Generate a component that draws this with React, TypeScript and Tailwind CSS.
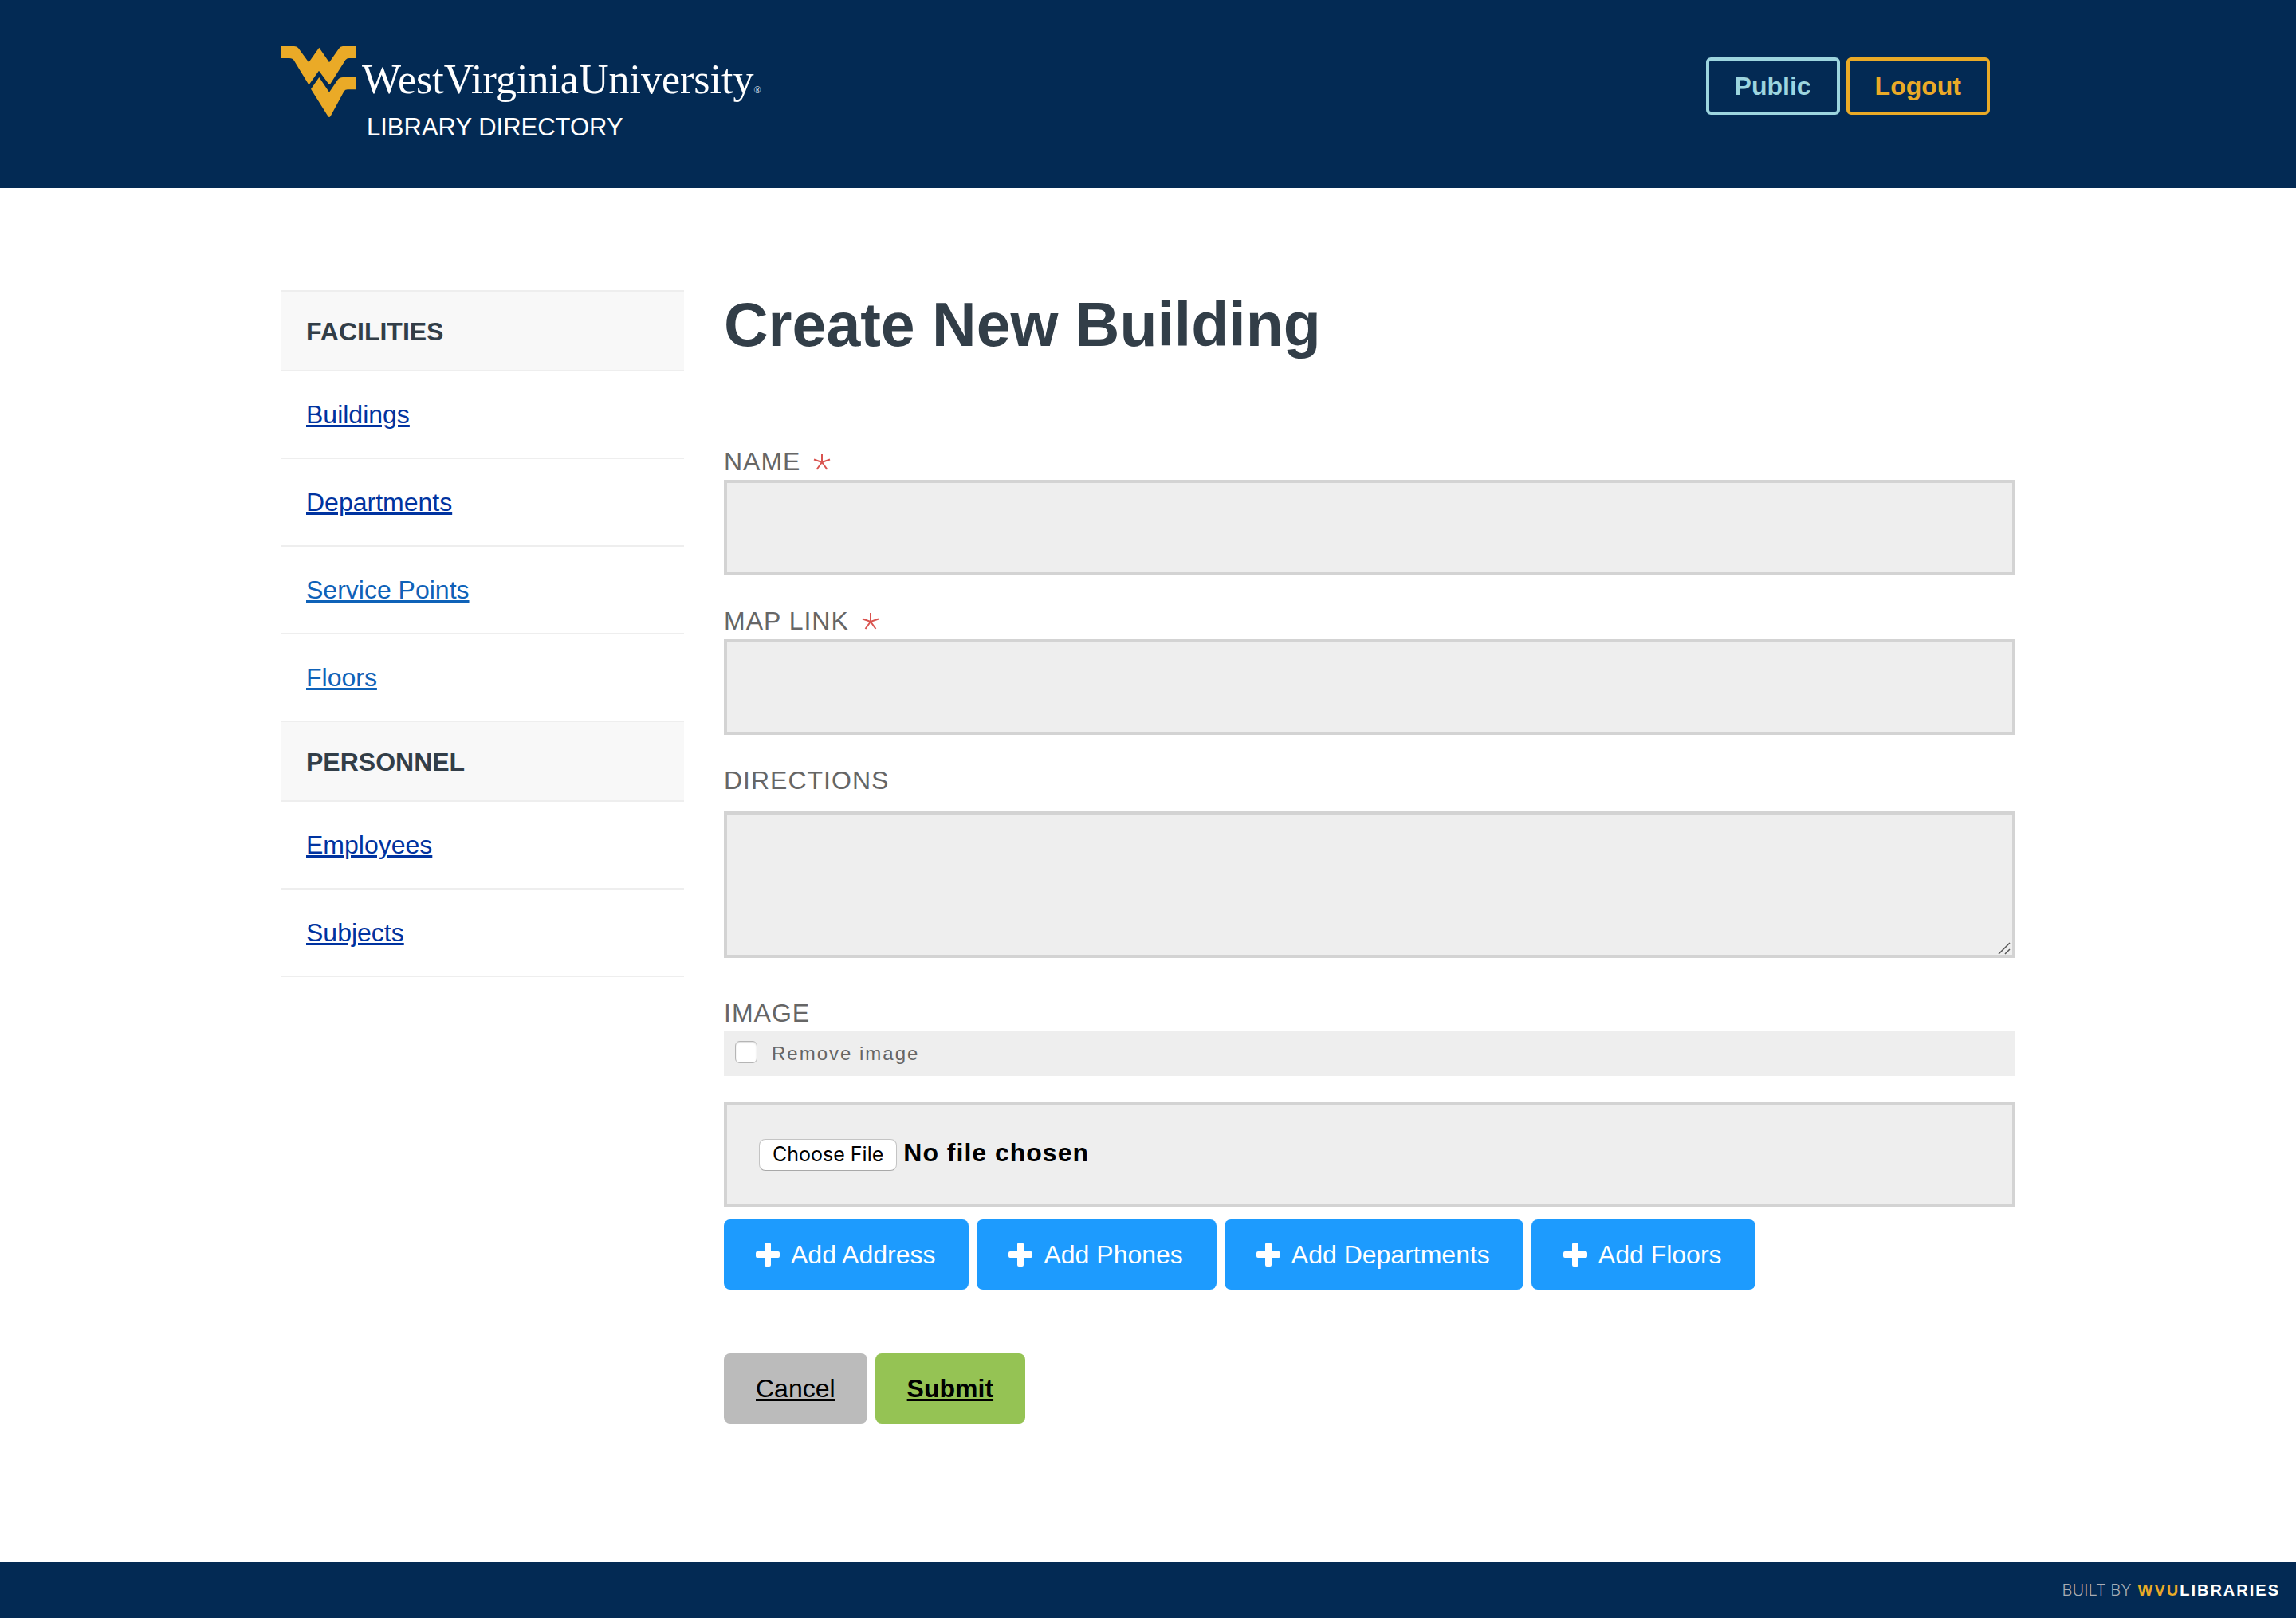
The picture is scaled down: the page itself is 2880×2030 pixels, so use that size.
import type { ReactNode } from "react";

const SANS = "font-['Liberation_Sans',Arial,sans-serif]";

function Logo() {
  return (
    <a href="#home" aria-label="West Virginia University Library Directory" className="flex text-white">
      <svg viewBox="0 0 96 90" className="h-[90px] w-24 shrink-0 fill-[#eaaa27]" aria-hidden="true">
        <path d="M1 0H17Q20 0 22 2L35.3 20.3L48.3 1.7L61 20.3L73 3Q75 0 78 0H95V15H86Q83 15 81.3 17.3L62.5 47Q61 48.5 60 47L48 30.7L36.5 47Q35.5 48.5 34.5 47L16.7 17.7Q15 15 11 15H1Z" />
        <path d="M48.3 39L61 57.7L71.7 42Q74 39 78 39H95V54.3H84Q81 54.3 79.7 56.3L62.5 88Q61 90 59.5 88L38 53.7Z" />
      </svg>
      <span className="flex flex-col pl-1.5 pt-3">
        <span className="flex items-baseline font-['Liberation_Serif',Georgia,serif] text-[52px] leading-[60px]">
          <span>West</span>
          <span>Virginia</span>
          <span>University</span>
          <span className="text-[12px] leading-none">®</span>
        </span>
        <span className="mt-2.5 pl-1.5 text-[31px] leading-10">LIBRARY DIRECTORY</span>
      </span>
    </a>
  );
}

function NavHeading({ children }: { children: ReactNode }) {
  return (
    <h2 className="border-b-2 border-[#eeeeee] bg-[#f8f8f8] px-8 pt-0.5 text-[32px] leading-[96px] font-bold text-[#323e48]">
      {children}
    </h2>
  );
}

function NavLink({ children, fresh = false }: { children: string; fresh?: boolean }) {
  return (
    <li className="border-b-2 border-[#eeeeee] px-8 text-[32px] leading-[108px]">
      <a
        href={"#" + children.toLowerCase().replace(" ", "-")}
        className={fresh ? "text-[#0f62b8] underline" : "text-[#0033a0] underline"}
      >
        {children}
      </a>
    </li>
  );
}

function Required() {
  return (
    <svg viewBox="0 0 22 22" className="h-[22px] w-[22px] stroke-[#d9534f] stroke-2" fill="none" aria-label="required">
      <path d="M11 1V12M1 8.5L11 12L21 8.5M11 12L4.5 21M11 12L17.5 21" />
    </svg>
  );
}

function FieldLabel({ id, required = false, children }: { id: string; required?: boolean; children: ReactNode }) {
  return (
    <label htmlFor={id} className="flex items-center gap-4 text-[32px] leading-[46px] tracking-[1px] text-[#666666]">
      {children}
      {required && <Required />}
    </label>
  );
}

function AddButton({ children }: { children: ReactNode }) {
  return (
    <button type="button" className="flex h-[88px] items-center gap-3.5 rounded-lg bg-[#1d9bfe] pr-[42px] pl-10 text-[32px] text-white">
      <svg viewBox="0 0 30 30" className="h-[30px] w-[30px] fill-white" aria-hidden="true">
        <path d="M13 0h4a2 2 0 0 1 2 2v9h9a2 2 0 0 1 2 2v4a2 2 0 0 1-2 2h-9v9a2 2 0 0 1-2 2h-4a2 2 0 0 1-2-2v-9H2a2 2 0 0 1-2-2v-4a2 2 0 0 1 2-2h9V2a2 2 0 0 1 2-2z" />
      </svg>
      {children}
    </button>
  );
}

const field = "block w-full border-4 border-[#d3d3d3] bg-[#eeeeee] px-10 text-[32px] font-bold text-black outline-none";

export default function App() {
  return (
    <div className={`${SANS} flex min-h-screen flex-col bg-white`}>
      <header className="bg-[#032a54]">
        <div className="mx-auto flex min-h-[236px] max-w-[2176px] items-start justify-between pt-[58px]">
          <Logo />
          <nav className="flex gap-2 pt-3.5 pr-8 text-[32px] leading-[64px] font-bold">
            <a href="#public" className="rounded-md border-4 border-[#9dd5df] px-8 text-[#9dd5df]">Public</a>
            <a href="#logout" className="rounded-md border-4 border-[#eaaa27] px-8 text-[#eaaa27]">Logout</a>
          </nav>
        </div>
      </header>

      <div className="mx-auto flex w-full max-w-[2176px] flex-1 items-start gap-[50px] pt-32 pb-32">
        <nav className="w-[506px] shrink-0 border-t-2 border-[#eeeeee]">
          <NavHeading>FACILITIES</NavHeading>
          <ul>
            <NavLink>Buildings</NavLink>
            <NavLink>Departments</NavLink>
            <NavLink fresh>Service Points</NavLink>
            <NavLink fresh>Floors</NavLink>
          </ul>
          <NavHeading>PERSONNEL</NavHeading>
          <ul>
            <NavLink>Employees</NavLink>
            <NavLink>Subjects</NavLink>
          </ul>
        </nav>

        <main className="min-w-0 flex-1">
          <h1 className="mb-[106px] text-[77px] leading-[86px] font-bold text-[#323e48]">Create New Building</h1>
          <form onSubmit={(e) => e.preventDefault()}>
            <div className="mb-[34px]">
              <FieldLabel id="name" required>NAME</FieldLabel>
              <input id="name" type="text" className={`${field} h-[120px]`} />
            </div>
            <div className="mb-[34px]">
              <FieldLabel id="map" required>MAP LINK</FieldLabel>
              <input id="map" type="text" className={`${field} h-[120px]`} />
            </div>
            <div className="mb-[46px]">
              <FieldLabel id="directions">DIRECTIONS</FieldLabel>
              <div className="relative mt-4">
                <textarea
                  id="directions"
                  className={`${field} h-[184px] resize-y [&::-webkit-resizer]:bg-transparent`}
                />
                <svg
                  viewBox="0 0 16 16"
                  className="pointer-events-none absolute right-1.5 bottom-1 h-4 w-4 stroke-[#555555]"
                  fill="none"
                  strokeWidth="1.5"
                  aria-hidden="true"
                >
                  <path d="M1 15L15 1M9 15L15 9" />
                </svg>
              </div>
            </div>
            <FieldLabel id="image">IMAGE</FieldLabel>
            <label className="flex h-14 items-center gap-[18px] bg-[#eeeeee] px-3.5 text-[24px] tracking-[2px] text-[#666666]">
              <input
                type="checkbox"
                className="mb-1 h-7 w-7 appearance-none rounded-md border border-[#b5b5b5] bg-white shadow-[inset_0_1px_2px_rgba(0,0,0,0.15)]"
              />
              Remove image
            </label>
            <input
              id="image"
              type="file"
              className="mt-8 block h-[132px] w-full border-4 border-[#d3d3d3] bg-[#eeeeee] px-10 pt-9 text-[32px] font-bold tracking-[1px] text-black file:mr-2 file:h-10 file:rounded-lg file:border file:border-[#c4c4c4] file:border-b-[#a8a8a8] file:bg-white file:px-4 file:font-['Inter',sans-serif] file:text-[25px] file:leading-none file:font-normal file:tracking-normal file:text-black"
            />
            <div className="mt-4 flex flex-wrap gap-2.5">
              <AddButton>Add Address</AddButton>
              <AddButton>Add Phones</AddButton>
              <AddButton>Add Departments</AddButton>
              <AddButton>Add Floors</AddButton>
            </div>
            <div className="mt-20 flex gap-2.5 text-[32px] leading-[88px]">
              <a href="#cancel" className="rounded-lg bg-[#bbbbbb] px-10 text-black underline">Cancel</a>
              <button type="submit" className="rounded-lg bg-[#95c354] px-10 font-bold text-black underline">Submit</button>
            </div>
          </form>
        </main>
      </div>

      <footer className="flex h-[70px] items-center justify-end gap-2 bg-[#032a54] px-5 text-[20px]">
        <span className="font-['Inter',sans-serif] font-light text-[#a9adb3]">BUILT BY</span>
        <a href="#libraries" className="font-bold tracking-[2px] text-white">
          <span className="text-[#eaaa27]">WVU</span>LIBRARIES
        </a>
      </footer>
    </div>
  );
}
